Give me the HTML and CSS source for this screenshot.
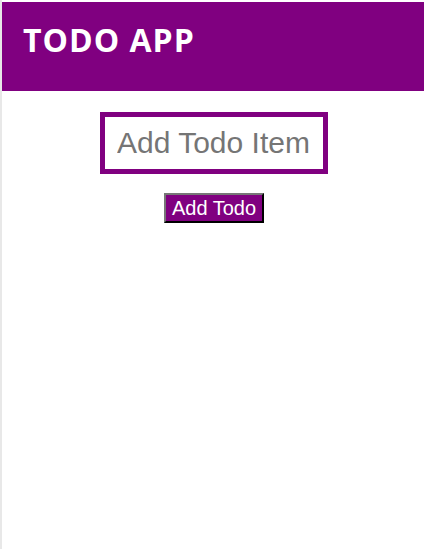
FILE: index.html
```html
<!DOCTYPE html>
<html>
<head>
<meta charset="utf-8">
<link rel="stylesheet" href="styles.css">
</head>
<body>
<div class="page">
  <header class="header">
    <h1 class="title">TODO APP</h1>
  </header>
  <main class="main">
    <input class="todo-input" type="text" placeholder="Add Todo Item">
    <button class="add-btn" type="button">Add Todo</button>
  </main>
</div>
</body>
</html>
```
FILE: styles.css
```css
html, body {
  margin: 0;
  padding: 0;
  height: 100%;
  background: #fff;
}
.page {
  box-sizing: border-box;
  min-height: 100%;
  padding-top: 2px;
  border-left: 2px solid #e8e8e8;
}
.header {
  background: #800080;
  height: 89px;
  display: flex;
  align-items: center;
  padding-left: 21px;
}
.title {
  margin: 0 0 14px 0;
  color: #fff;
  font-family: "Open Sans", sans-serif;
  font-weight: 700;
  font-size: 32px;
  letter-spacing: 1px;
}
.main {
  display: flex;
  flex-direction: column;
  align-items: center;
  padding-top: 21px;
  padding-left: 2px;
  font-family: "Liberation Sans", Arial, sans-serif;
}
.todo-input {
  box-sizing: border-box;
  width: 228px;
  height: 62px;
  border: 5px solid #800080;
  padding: 0 12px 1px 12px;
  font-family: "Liberation Sans", Arial, sans-serif;
  font-size: 30px;
  color: #333;
  outline: none;
}
.todo-input::placeholder {
  color: #757575;
}
.add-btn {
  margin-top: 19px;
  box-sizing: border-box;
  width: 100px;
  height: 30px;
  background: #800080;
  color: #fff;
  font-family: "Liberation Sans", Arial, sans-serif;
  font-size: 20px;
  padding: 0;
  border: 2px outset #767676;
  border-color: #777 #222 #222 #777;
}
```
